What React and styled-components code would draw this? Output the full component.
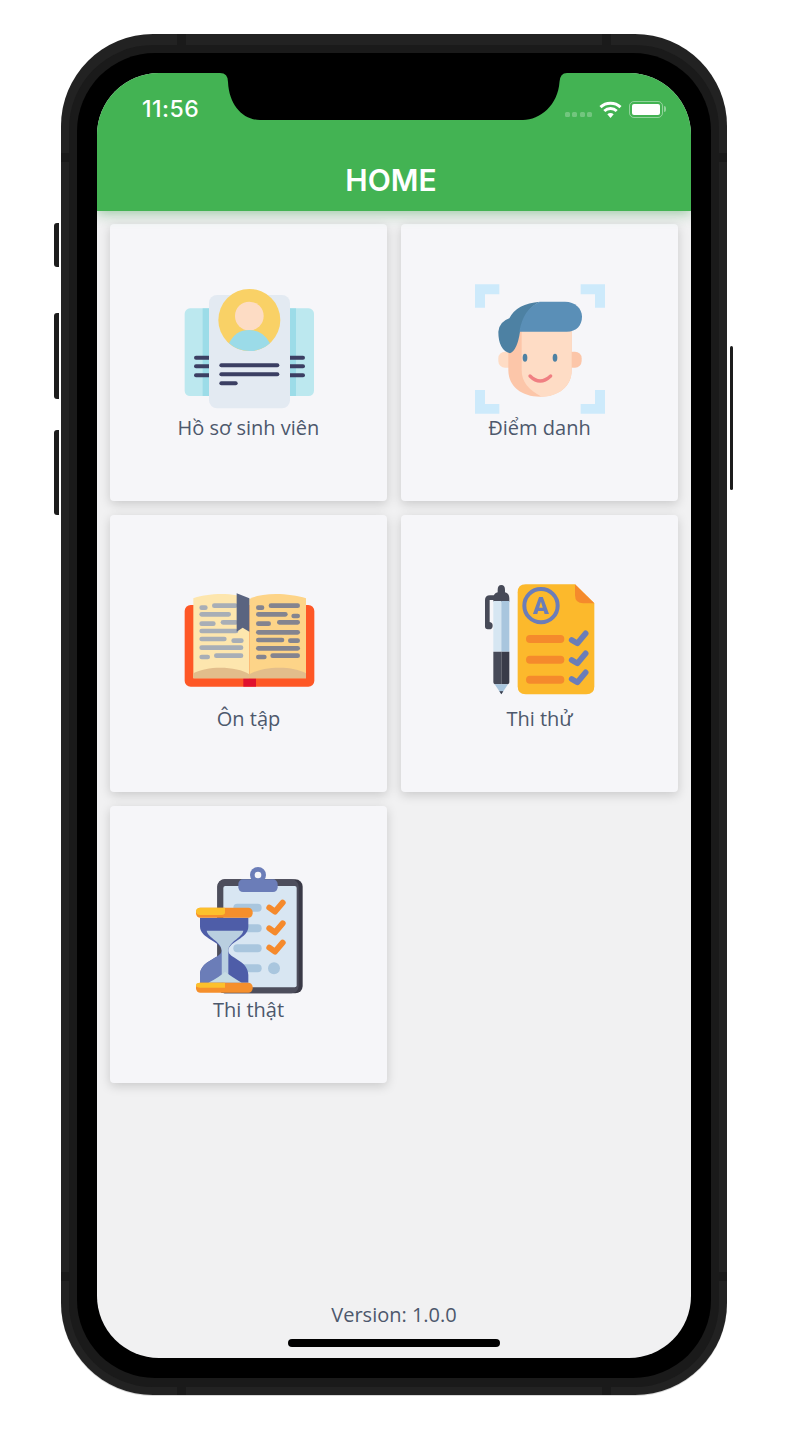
import React from "react";
import styled, { createGlobalStyle } from "styled-components";

const Global = createGlobalStyle`
  html, body { margin: 0; padding: 0; background: #fff; }
  body { font-family: "Open Sans", sans-serif; }
`;

const Page = styled.div`
  width: 798px;
  height: 1452px;
  box-sizing: border-box;
  padding: 34px 0 0 61px;
  overflow: hidden;
`;
const Shell = styled.div`
  position: relative;
  width: 666px;
  height: 1361px;
  box-sizing: border-box;
  padding: 11px 8px 8px;
  background: #222222;
  border-radius: 92px;
  box-shadow: 0 1px 0 #d8d8d8;
`;
const Bezel = styled.div`
  height: 100%;
  box-sizing: border-box;
  padding: 8px 8px 9px;
  background: #1a1a1a;
  border-radius: 84px;
`;
const Glass = styled.div`
  position: relative;
  height: 100%;
  box-sizing: border-box;
  padding: 20px;
  background: #000;
  border-radius: 78px;
`;
const SideButton = styled.div`
  position: absolute;
  top: ${(p) => p.$top}px;
  height: ${(p) => p.$h}px;
  ${(p) => (p.$right ? "right: -6px; width: 3px;" : "left: -7px; width: 5px;")}
  background: #1c1c1c;
  border-radius: ${(p) => (p.$right ? "2px" : "3px 0 0 3px")};
`;
const BandH = styled.div`
  position: absolute;
  ${(p) => (p.$bottom ? "bottom: 0;" : "top: 0;")}
  left: ${(p) => p.$left}px;
  width: 9px;
  height: ${(p) => (p.$bottom ? 8 : 11)}px;
  background: #1a1a1a;
`;
const BandV = styled.div`
  position: absolute;
  ${(p) => (p.$right ? "right: 0;" : "left: 0;")}
  top: ${(p) => p.$top}px;
  width: 8px;
  height: 9px;
  background: #1a1a1a;
`;
const Screen = styled.div`
  position: relative;
  height: 100%;
  display: flex;
  flex-direction: column;
  background: #f1f1f2;
  border-radius: 62px;
  overflow: hidden;
`;
const Notch = styled.svg`
  position: absolute;
  z-index: 2;
  top: 0;
  left: 123px;
  width: 347px;
  height: 47px;
`;
const Header = styled.header`
  position: relative;
  z-index: 1;
  height: 138px;
  flex: none;
  background: #43b353;
  box-shadow: 0 2px 13px rgba(48, 150, 70, 0.48);
`;
const StatusBar = styled.div`
  height: 72px;
  box-sizing: border-box;
  padding: 0 25px 0 45px;
  display: flex;
  align-items: center;
  justify-content: space-between;
`;
const Time = styled.span`
  font-family: Inter, sans-serif;
  font-weight: 500;
  font-size: 23px;
  letter-spacing: 0.5px;
  color: #fff;
`;
const StatusIcons = styled.div`
  display: flex;
  align-items: center;
  gap: 7px;
`;
const SignalDots = styled.div`
  display: flex;
  gap: 2.3px;
  margin-top: 10px;
`;
const SignalDot = styled.span`
  width: 5px;
  height: 5px;
  border-radius: 1.5px;
  background: rgba(255, 255, 255, 0.25);
`;
const Battery = styled.div`
  position: relative;
  width: 34px;
  height: 17px;
  box-sizing: border-box;
  padding: 2px;
  border: 1.5px solid rgba(255, 255, 255, 0.42);
  border-radius: 5px;
  margin-right: 3px;
  &::after {
    content: "";
    position: absolute;
    right: -4px;
    top: 4px;
    width: 2px;
    height: 6px;
    border-radius: 0 2px 2px 0;
    background: rgba(255, 255, 255, 0.42);
  }
`;
const BatteryFill = styled.div`
  height: 100%;
  background: #fff;
  border-radius: 2px;
`;
const Title = styled.h1`
  margin: 0;
  height: 66px;
  padding-right: 6px;
  line-height: 71px;
  text-align: center;
  font-family: Inter, sans-serif;
  font-weight: 600;
  font-size: 30px;
  color: #fff;
`;
const Body = styled.main`
  flex: 1;
  display: flex;
  flex-direction: column;
  padding: 13px 13px 0;
`;
const Grid = styled.div`
  display: grid;
  grid-template-columns: repeat(2, 277px);
  grid-auto-rows: 277px;
  gap: 14px;
`;
const Card = styled.div`
  display: flex;
  flex-direction: column;
  align-items: center;
  justify-content: center;
  background: #f6f6f9;
  border-radius: 4px;
  box-shadow: 0 3px 11px rgba(0, 0, 0, 0.17);
`;
const IconSvg = styled.svg`
  display: block;
  width: 130px;
  height: 130px;
  overflow: visible;
  filter: blur(0.35px);
`;
const Label = styled.span`
  font-size: 20px;
  line-height: 28px;
  color: #4d586c;
`;
const Version = styled.div`
  margin-top: auto;
  padding-bottom: 29px;
  font-size: 20px;
  line-height: 28px;
  text-align: center;
  color: #4d586c;
`;
const HomeBar = styled.div`
  position: absolute;
  left: 191px;
  bottom: 11px;
  width: 212px;
  height: 8px;
  border-radius: 4px;
  background: #000;
`;

const Bars = ({ items, color, w = 12 }) => (
  <g stroke={color} strokeWidth={w} strokeLinecap="round">
    {items.map(([a, b, y], i) => (
      <line key={i} x1={a} x2={b} y1={y} y2={y} />
    ))}
  </g>
);

const ProfileIcon = () => (
  <IconSvg viewBox="42 12 390 390">
    <rect x="44" y="85" width="100" height="263" rx="16" fill="#bce8ef" />
    <rect x="98" y="85" width="40" height="263" fill="#9cdce8" />
    <rect x="332" y="85" width="100" height="263" rx="16" fill="#bce8ef" />
    <rect x="340" y="85" width="38" height="263" fill="#9cdce8" />
    <Bars color="#3b3f63" items={[[78, 117, 233], [78, 117, 259], [78, 117, 286], [360, 399, 233], [360, 399, 259], [360, 399, 286]]} />
    <rect x="117" y="45" width="243" height="340" rx="24" fill="#e3eaf2" />
    <circle cx="238" cy="120" r="93" fill="#f9d166" />
    <circle cx="238" cy="108" r="43" fill="#fddcc4" />
    <path d="M177 190 Q196 150 238 150 Q280 150 300 190 A93 93 0 0 1 177 190Z" fill="#9bdbe8" />
    <Bars color="#3b3f63" items={[[154, 322, 256], [154, 322, 283], [154, 197, 310]]} />
  </IconSvg>
);

const FaceIcon = () => (
  <IconSvg viewBox="45 27 390 390">
    <g fill="#cdeafb">
      <path d="M45 28H118V58H75V98H45Z" />
      <path d="M362 28H435V98H405V58H362Z" />
      <path d="M45 345H75V387H118V416H45Z" />
      <path d="M405 345H435V416H362V387H405Z" />
    </g>
    <rect x="115" y="230" width="50" height="48" rx="20" fill="#fedcc5" />
    <rect x="318" y="230" width="47" height="48" rx="20" fill="#fcc6a9" />
    <path d="M145 160H335V285C335 335 295 365 240 365C185 365 145 335 145 285Z" fill="#fcc6a9" />
    <path d="M185 160H335V285C335 335 295 365 245 365C205 345 185 320 185 285Z" fill="#fedcc5" />
    <path d="M115 170Q118 140 148 130Q170 85 240 80Q195 100 180 170Q172 225 150 235Q115 225 115 170Z" fill="#4d81a3" />
    <path d="M240 80H315C345 80 366 100 366 125C366 150 350 170 320 170H178Q190 100 240 80Z" fill="#5a8fb7" />
    <ellipse cx="195" cy="248" rx="7" ry="12" fill="#4d81a3" />
    <ellipse cx="285" cy="248" rx="7" ry="12" fill="#4d81a3" />
    <path d="M210 303Q240 333 272 303" fill="none" stroke="#f07f82" strokeWidth="10" strokeLinecap="round" />
  </IconSvg>
);

const BookIcon = () => (
  <IconSvg viewBox="42 0 390 390">
    <rect x="44" y="90" width="389" height="245" rx="18" fill="#fe5726" />
    <rect x="220" y="310" width="38" height="25" fill="#e0112f" />
    <path d="M70 70C110 55 190 50 238 72V310H70Z" fill="#fde6ae" />
    <path d="M238 72C280 50 360 55 408 70V310H238Z" fill="#fdd488" />
    <path d="M70 295C110 272 200 272 238 298V310H70Z" fill="#e2bd8b" />
    <path d="M238 298C280 272 370 272 408 295V310H238Z" fill="#e2bd8b" />
    <Bars color="#a8aeb6" w={14} items={[[95, 106, 98], [133, 196, 92], [95, 176, 118], [95, 130, 146], [159, 198, 142], [95, 198, 168], [95, 163, 192], [191, 214, 197], [95, 213, 218], [95, 113, 246], [139, 213, 242]]} />
    <Bars color="#84848f" w={14} items={[[265, 276, 98], [303, 383, 92], [265, 346, 118], [371, 383, 123], [265, 296, 146], [328, 383, 142], [265, 383, 172], [265, 336, 195], [361, 383, 197], [265, 383, 220], [265, 283, 246], [308, 383, 242]]} />
    <path d="M200 55L238 70V170L218 158L200 170Z" fill="#5a6480" />
  </IconSvg>
);

const checkA = "M305 195L322 205L347 175";

const ExamIcon = () => (
  <IconSvg viewBox="15 0 390 390">
    <path d="M52 155V75Q52 68 60 68H80" fill="none" stroke="#474a58" strokeWidth="14" strokeLinecap="round" />
    <circle cx="57" cy="152" r="11" fill="#474a58" />
    <path d="M83 45Q83 30 94 30Q105 30 105 45V52Q118 55 118 70V80H70V70Q70 55 83 52Z" fill="#474a58" />
    <rect x="70" y="78" width="24" height="152" fill="#d6e6f2" />
    <rect x="94" y="78" width="24" height="152" fill="#a9c6de" />
    <path d="M70 230H94V328H78Q70 328 70 320Z" fill="#474a58" />
    <path d="M94 230H118V320Q118 328 110 328H94Z" fill="#393b49" />
    <path d="M74 328H114L94 358Z" fill="#a9c6de" />
    <path d="M88 349H100L94 358Z" fill="#393b49" />
    <path d="M167 28H315L373 85V334Q373 358 349 358H167Q143 358 143 334V52Q143 28 167 28Z" fill="#fcb92c" />
    <path d="M315 28L373 85H340Q315 85 315 60Z" fill="#f58a2c" />
    <circle cx="213" cy="92" r="50" fill="none" stroke="#6b7db8" strokeWidth="12" />
    <text x="213" y="118" textAnchor="middle" fontFamily="Roboto, sans-serif" fontWeight="900" fontSize="70" fill="#6b7db8">A</text>
    <Bars color="#f58a2c" w={24} items={[[180, 271, 192], [180, 271, 254], [180, 271, 314]]} />
    <g fill="none" stroke="#6b7db8" strokeWidth="17" strokeLinecap="round" strokeLinejoin="round">
      <path d={checkA} />
      <path d={checkA} transform="translate(0 60)" />
      <path d={checkA} transform="translate(0 117)" />
    </g>
  </IconSvg>
);

const checkB = "M268 143L285 155L308 128";

const RealExamIcon = () => (
  <IconSvg viewBox="12 18 390 390">
    <rect x="112" y="58" width="256" height="342" rx="22" fill="#3a3a47" />
    <rect x="112" y="58" width="244" height="342" rx="22" fill="#4d4e5c" />
    <rect x="130" y="78" width="220" height="304" rx="6" fill="#d8e6f2" />
    <circle cx="234" cy="45" r="24" fill="#6b7db8" />
    <rect x="175" y="58" width="118" height="38" rx="14" fill="#6b7db8" />
    <circle cx="234" cy="45" r="10" fill="#f6f6f9" />
    <Bars color="#a9c6de" w={24} items={[[172, 233, 143], [172, 233, 205], [172, 233, 265], [172, 233, 325]]} />
    <g fill="none" stroke="#f58a2c" strokeWidth="18" strokeLinecap="round" strokeLinejoin="round">
      <path d={checkB} />
      <path d={checkB} transform="translate(0 62)" />
      <path d={checkB} transform="translate(0 120)" />
    </g>
    <circle cx="282" cy="325" r="18" fill="#a9c6de" />
    <path d="M60 173H205V200C205 235 145 245 145 272C145 295 205 300 205 345V368H60V345C60 300 125 295 125 272C125 245 60 235 60 200Z" fill="#4e5da8" />
    <path d="M60 368V345C60 300 125 295 125 272V368Z" fill="#6b7db8" />
    <path d="M80 212H190C185 235 145 245 145 272V345H125V272C125 245 85 235 80 212Z" fill="#b9cfe0" />
    <path d="M85 368Q120 350 135 335Q155 350 185 368Z" fill="#c5dbe3" />
    <rect x="48" y="143" width="170" height="30" rx="13" fill="#f58f2c" />
    <path d="M61 143H135V158Q135 165 120 165H61Q48 165 48 154Q48 143 61 143Z" fill="#fcc02c" />
    <rect x="48" y="368" width="170" height="30" rx="13" fill="#f58f2c" />
    <path d="M61 368H135V383H61Q48 383 48 375Q48 368 61 368Z" fill="#fcc02c" />
  </IconSvg>
);

const cards = [
  { label: "Hồ sơ sinh viên", Icon: ProfileIcon },
  { label: "Điểm danh", Icon: FaceIcon },
  { label: "Ôn tập", Icon: BookIcon },
  { label: "Thi thử", Icon: ExamIcon },
  { label: "Thi thật", Icon: RealExamIcon },
];

export default function App() {
  return (
    <Page>
      <Global />
      <Shell>
        <SideButton $top={189} $h={44} />
        <SideButton $top={279} $h={86} />
        <SideButton $top={396} $h={85} />
        <SideButton $right $top={312} $h={144} />
        <BandH $left={116} />
        <BandH $left={541} />
        <BandH $bottom $left={116} />
        <BandH $bottom $left={541} />
        <BandV $top={119} />
        <BandV $right $top={119} />
        <BandV $top={1238} />
        <BandV $right $top={1238} />
        <Bezel>
          <Glass>
            <Screen>
              <Header>
                <StatusBar>
                  <Time>11:56</Time>
                  <StatusIcons>
                    <SignalDots>
                      {[0, 1, 2, 3].map((i) => <SignalDot key={i} />)}
                    </SignalDots>
                    <svg width="23" height="17" viewBox="0 0 23 17" fill="none" stroke="#fff" strokeWidth="3">
                      <path d="M1.5 6.2C7 1 16 1 21.5 6.2" />
                      <path d="M5.3 10C8.8 6.8 14.2 6.8 17.7 10" />
                      <path d="M8.3 13.2Q11.5 11 14.7 13.2L11.5 17Z" fill="#fff" stroke="none" />
                    </svg>
                    <Battery><BatteryFill /></Battery>
                  </StatusIcons>
                </StatusBar>
                <Title>HOME</Title>
              </Header>
              <Notch viewBox="0 0 347 47">
                <path d="M0 0H347Q340 0 339.5 9C338 32 320 47 303 47H40C23 47 9 32 8 9Q8 0 0 0Z" fill="#000" />
              </Notch>
              <Body>
                <Grid>
                  {cards.map(({ label, Icon }) => (
                    <Card key={label}>
                      <Icon />
                      <Label>{label}</Label>
                    </Card>
                  ))}
                </Grid>
                <Version>Version: 1.0.0</Version>
              </Body>
              <HomeBar />
            </Screen>
          </Glass>
        </Bezel>
      </Shell>
    </Page>
  );
}
